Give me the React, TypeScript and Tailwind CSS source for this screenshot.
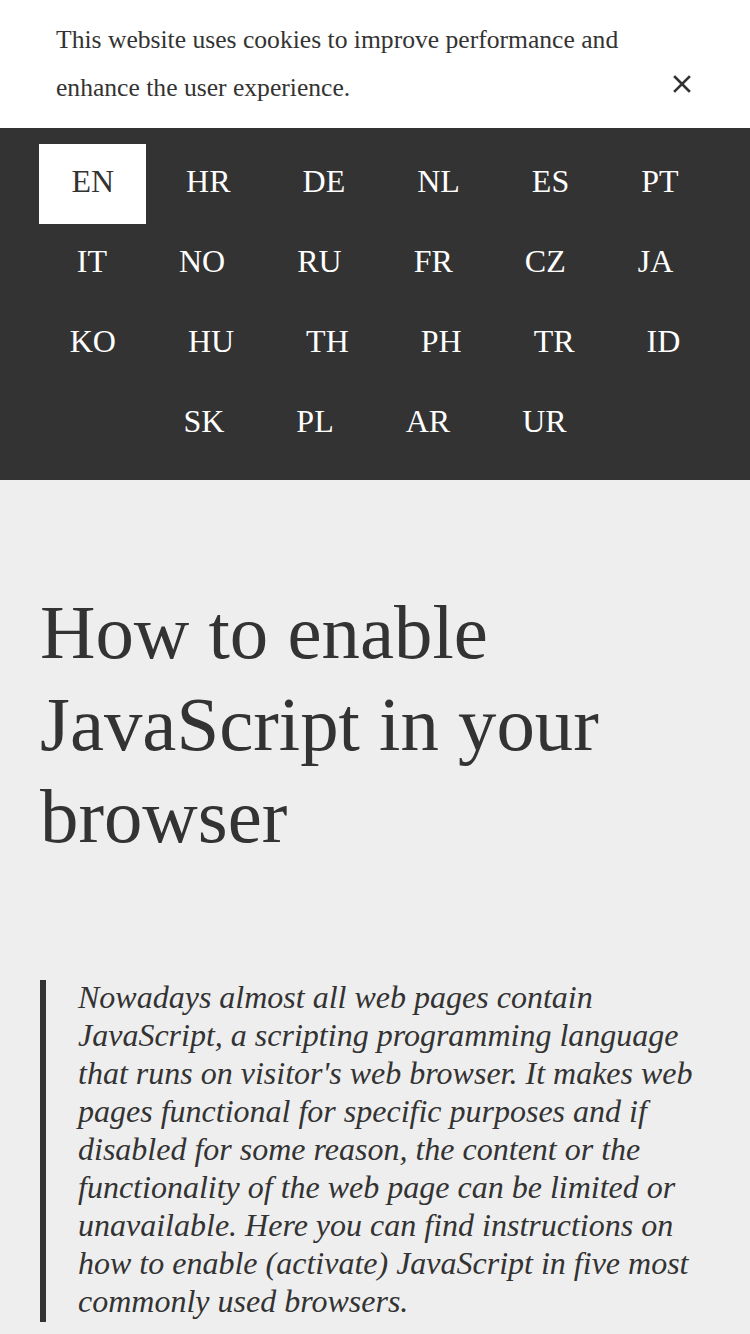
const languages = [
  "EN", "HR", "DE", "NL", "ES", "PT",
  "IT", "NO", "RU", "FR", "CZ", "JA",
  "KO", "HU", "TH", "PH", "TR", "ID",
  "SK", "PL", "AR", "UR",
];

const CookieBar = () => (
  <div className="bg-white py-4 flex text-[#333]">
    <p className="ml-14 w-[600px] text-[25.6px] leading-[48px]">
      This website uses cookies to improve performance and enhance the user experience.
    </p>
    <button className="ml-[17px] mt-[59px] w-[18px] h-[18px] text-[#333]" aria-label="Close">
      <svg viewBox="0 0 18 18" width="18" height="18">
        <path d="M2 2 L16 16 M16 2 L2 16" stroke="currentColor" strokeWidth="2.6" strokeLinecap="square" />
      </svg>
    </button>
  </div>
);

const LanguageBar = () => (
  <nav className="bg-[#333333] px-8 py-4">
    <ul className="flex flex-wrap justify-center gap-x-2">
      {languages.map((lang) => (
        <li key={lang}>
          <a
            href="#"
            className={`h-20 px-8 pb-[6px] flex items-center text-[32px] leading-none ${
              lang === "EN" ? "bg-white text-[#333]" : "text-white"
            }`}
          >
            {lang}
          </a>
        </li>
      ))}
    </ul>
  </nav>
);

export default function App() {
  return (
    <div className="min-h-[1334px] bg-[#eeeeee] font-['Liberation_Serif','Times_New_Roman',serif]">
      <CookieBar />
      <LanguageBar />
      <main className="px-10 pt-[107px] text-[#333]">
        <h1 className="text-[76.8px] leading-[92px] font-normal">
          How to enable JavaScript in your browser
        </h1>
        <blockquote className="flow-root mt-[117px] border-l-[6px] border-[#333] pl-8 pb-[2px] italic text-[32px] leading-[38px]">
          <p className="-mt-[2px]">
            Nowadays almost all web pages contain JavaScript, a scripting programming language that
            runs on visitor's web browser. It makes web pages functional for specific purposes and
            if disabled for some reason, the content or the functionality of the web page can be
            limited or unavailable. Here you can find instructions on how to enable (activate)
            JavaScript in five most commonly used browsers.
          </p>
        </blockquote>
      </main>
    </div>
  );
}
